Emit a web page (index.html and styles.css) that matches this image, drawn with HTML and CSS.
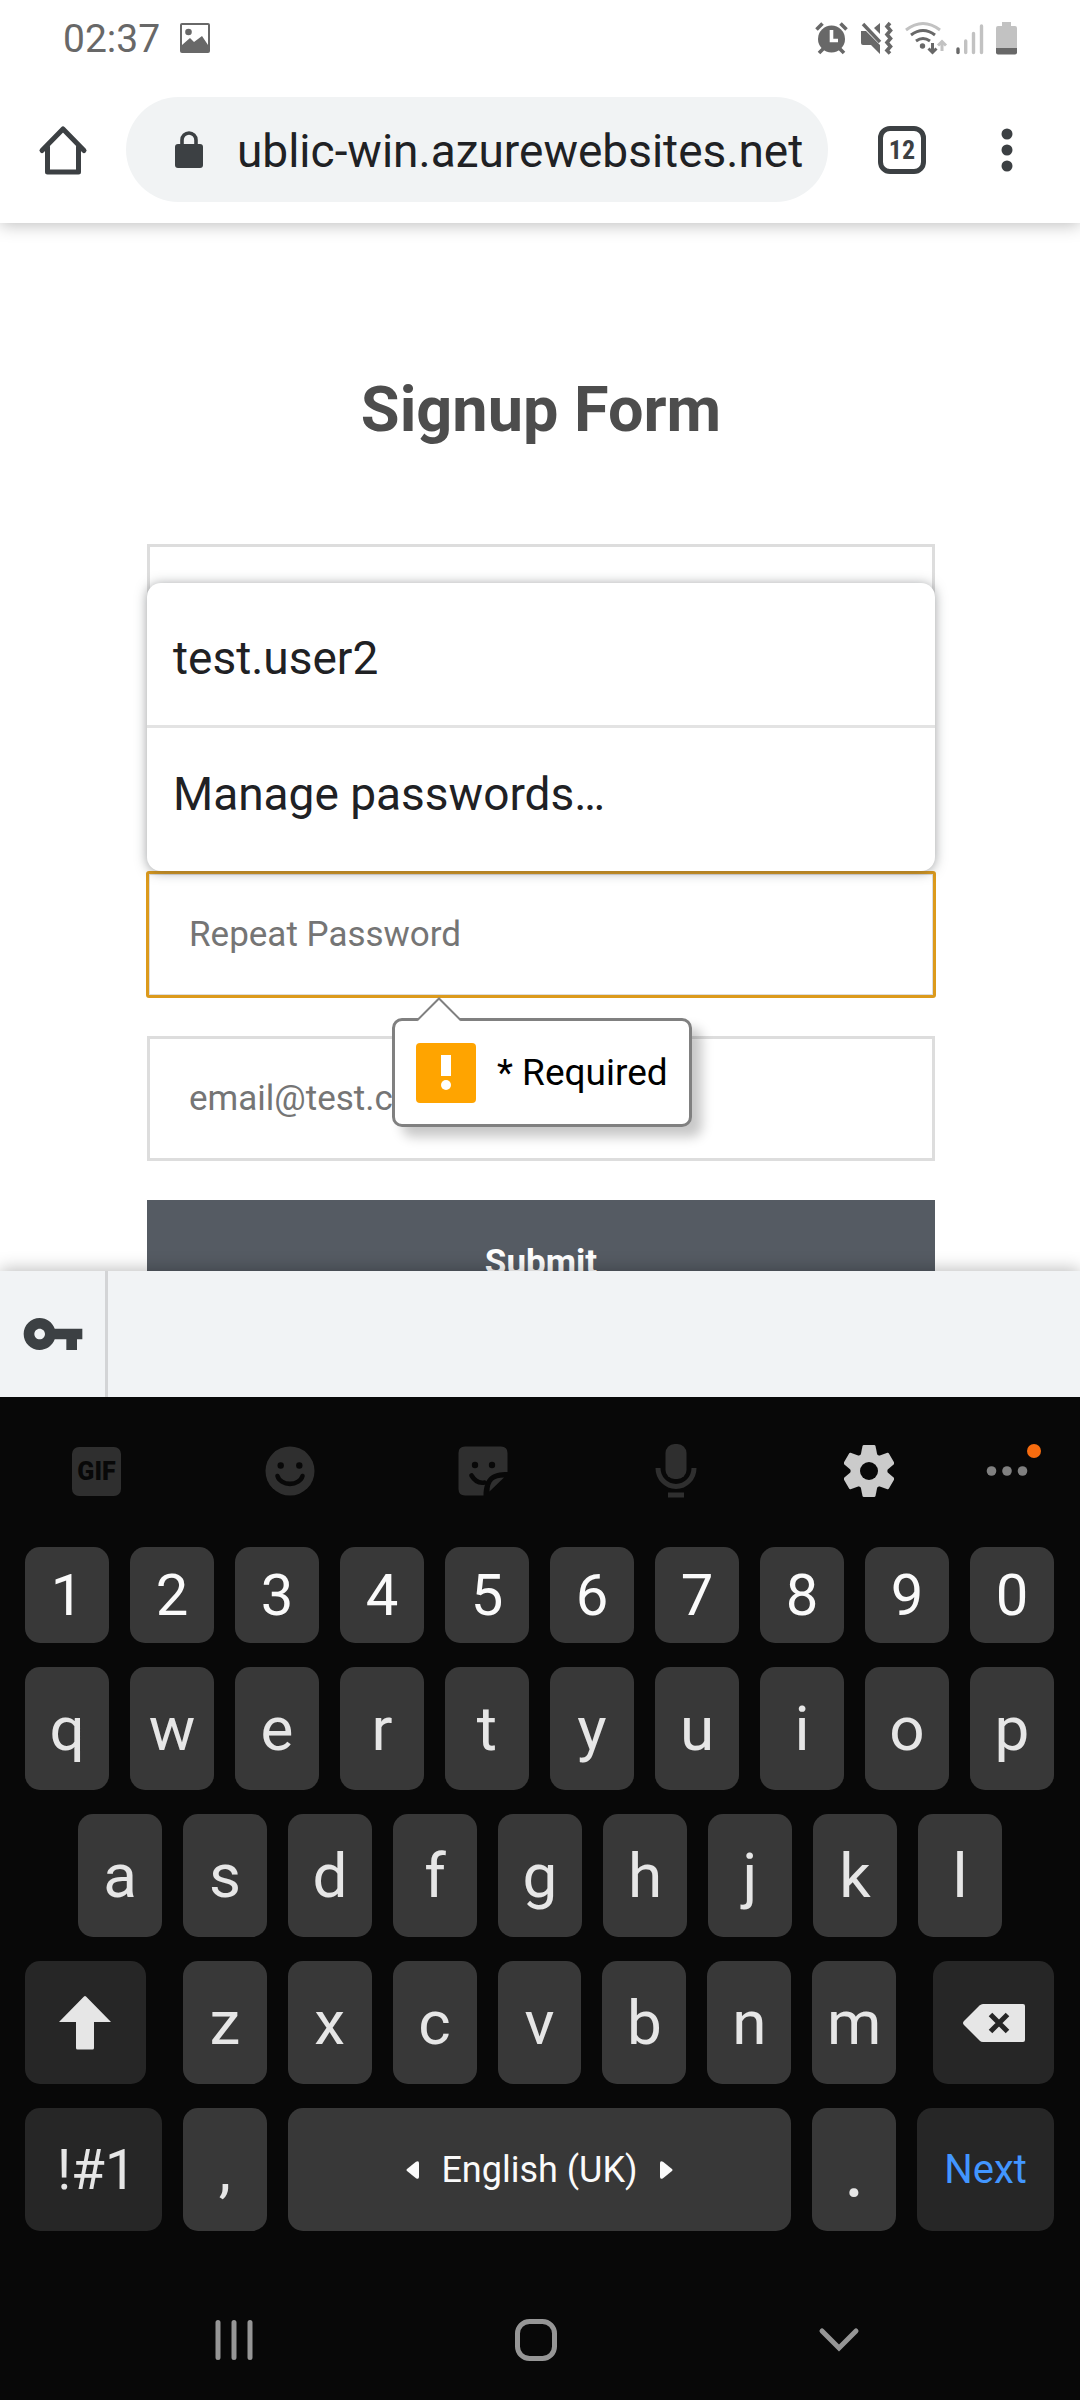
FILE: index.html
```html
<!DOCTYPE html>
<html lang="en">
<head>
<meta charset="utf-8">
<meta name="viewport" content="width=device-width, initial-scale=1">
<title>Signup Form</title>
<link rel="stylesheet" href="styles.css">
</head>
<body>
<header class="top">
  <div class="status">
    <time class="clock">02:37</time>
    <svg class="status-picture" width="32" height="32" viewBox="0 0 32 32"><rect x="1" y="1" width="30" height="30" rx="2" fill="#686868"/><path d="M3 3h26v20l-6-9-8 6-4-4-8 7z" fill="#fff"/><circle cx="9.500" cy="10" r="3.300" fill="#686868"/></svg>
    <div class="status-right">
      <svg width="33" height="34" viewBox="0 0 33 34" fill="none" stroke="#686868"><circle cx="16.500" cy="18" r="13.500" fill="#686868" stroke="none"/><path d="M1.500 8.500l6-6M31.500 8.500l-6-6M4 32l5-5M29 32l-5-5" stroke-width="3.600"/><path d="M16.500 9v10.500h6.500" stroke="#fff" stroke-width="3.600"/></svg>
      <svg width="33" height="34" viewBox="0 0 33 34"><path d="M1 10h5l14 14v9l-9-9H3q-2 0-2-2z" fill="#686868"/><path d="M14 7l6-5v11z" fill="#686868"/><path d="M3 3l17 18" stroke="#686868" stroke-width="3.400"/><path d="M30 2l-3 3.500 3.500 4-3.500 4 3.500 4-3.500 4 3.500 4-3.500 4 3 3" fill="none" stroke="#686868" stroke-width="3.600"/></svg>
      <svg class="wifi" width="43" height="34" viewBox="0 0 43 34" fill="none" stroke="#686868" stroke-width="3"><path d="M1 9q17-13 34 0" stroke="#c2c2c2"/><path d="M6 14q12-9 24 0M11 20q7-5 14 0"/><circle cx="17.500" cy="25" r="2.700" fill="#686868" stroke="none"/><path d="M27.500 22v9M23.500 27.500l4 4 4-4"/><path d="M37 30v-9M33 24.500l4-4 4 4" stroke="#c2c2c2"/></svg>
      <svg width="28" height="34" viewBox="0 0 28 34" stroke-width="3.400" stroke-linecap="round"><path d="M2 28v3.500" stroke="#686868"/><path d="M9.700 20v11.500M17.500 12.500v19M25.500 5v26.500" stroke="#c2c2c2"/></svg>
      <svg width="21" height="34" viewBox="0 0 21 34"><path d="M6 1h9v4h4q2 0 2 2v20H0V7q0-2 2-2h4z" fill="#c2c2c2"/><path d="M0 27h21v4.500q0 2-2 2H2q-2 0-2-2z" fill="#686868"/></svg>
    </div>
  </div>
  <div class="toolbar">
    <button class="icon-button" type="button" aria-label="Home"><svg width="50" height="50" viewBox="0 0 50 50" fill="none" stroke="#3c4043" stroke-width="5" stroke-linejoin="round" stroke-linecap="round"><path d="M4 25.500L25 4l21 21.500"/><path d="M9.500 22v25h31V22"/></svg></button>
    <div class="address">
      <svg width="30" height="40" viewBox="0 0 30 40"><path d="M8 16V10a7 7 0 0 1 14 0v6" fill="none" stroke="#3c4043" stroke-width="3.600"/><rect x="1" y="14" width="28" height="24" rx="3" fill="#3c4043"/></svg>
      <input class="url" type="text" aria-label="Address" value="ublic-win.azurewebsites.net">
    </div>
    <button class="tabs" type="button" aria-label="Open tabs">12</button>
    <button class="icon-button" type="button" aria-label="Menu"><svg width="12" height="44" viewBox="0 0 12 44" fill="#3c4043"><circle cx="6" cy="6" r="5.500"/><circle cx="6" cy="22" r="5.500"/><circle cx="6" cy="38" r="5.500"/></svg></button>
  </div>
</header>

<main class="page">
  <h1 class="title">Signup Form</h1>
  <form class="form">
    <input class="field" type="text" aria-label="Username">
    <input class="field" type="password" aria-label="Password">
    <div class="anchor">
      <input class="field field-active" type="text" placeholder="Repeat Password" aria-label="Repeat Password">
      <div class="suggestions">
        <button class="suggestion" type="button">test.user2</button>
        <button class="suggestion" type="button">Manage passwords…</button>
      </div>
      <div class="tip" role="alert">
        <svg class="tip-arrow" width="44" height="26" viewBox="0 0 44 26"><path d="M0 26V23L22 1l22 22v3z" fill="#fff"/><path d="M0 23.500L22 1.500l22 22" fill="none" stroke="#808080" stroke-width="2"/></svg>
        <svg width="60" height="60" viewBox="0 0 60 60"><rect width="60" height="60" rx="4" fill="#ffa400"/><path d="M25 12h10v21H25z" fill="#fff"/><circle cx="30" cy="42" r="5" fill="#fff"/></svg>
        <span>* Required</span>
      </div>
    </div>
    <input class="field" type="email" placeholder="email@test.com" aria-label="Email">
    <button class="submit" type="submit">Submit</button>
  </form>
</main>

<div class="accessory">
  <button class="passwords" type="button" aria-label="Saved passwords"><svg width="64" height="64" viewBox="0 0 24 24" fill="#3c4043"><path d="M12.650 10C11.830 7.670 9.610 6 7 6c-3.310 0-6 2.690-6 6s2.690 6 6 6c2.610 0 4.830-1.670 5.650-4H17v4h4v-4h2v-4H12.650zM7 14c-1.100 0-2-.9-2-2s.9-2 2-2 2 .9 2 2-.9 2-2 2z"/></svg></button>
</div>

<section class="keyboard" aria-label="Keyboard">
  <div class="tools">
    <button class="tool" type="button"><span class="gif">GIF</span></button>
    <button class="tool" type="button" aria-label="Emoji"><svg width="50" height="50" viewBox="0 0 50 50"><circle cx="25" cy="25" r="24.500" fill="#2f2f2f"/><circle cx="15.700" cy="19.500" r="3.200" fill="#080808"/><circle cx="34.300" cy="19.500" r="3.200" fill="#080808"/><path d="M12.500 30a12.800 10 0 0 0 25 0" fill="none" stroke="#080808" stroke-width="4.600" stroke-linecap="round"/></svg></button>
    <button class="tool" type="button" aria-label="Stickers"><svg width="50" height="50" viewBox="0 0 50 50"><path d="M7 .5h36q6.500 0 6.500 6.500v19C34 26 26 31 25.500 49.500H7Q.5 49.500.5 43V7Q.5.5 7 .5z" fill="#2f2f2f"/><circle cx="17" cy="19" r="3.200" fill="#080808"/><circle cx="34" cy="19" r="3.200" fill="#080808"/><path d="M13.500 29.500q5 8.500 13 7" fill="none" stroke="#080808" stroke-width="4.600" stroke-linecap="round"/><path d="M46 31.500L31.500 45.500C31.500 35 36 31.500 46 31.500z" fill="#2f2f2f"/></svg></button>
    <button class="tool" type="button" aria-label="Voice input"><svg width="42" height="54" viewBox="0 0 42 54" fill="#2f2f2f"><rect x="10.500" y="0" width="21" height="35" rx="9"/><path d="M3 24a18 18.500 0 0 0 36 0" fill="none" stroke="#2f2f2f" stroke-width="5"/><rect x="13" y="48.500" width="16" height="5"/></svg></button>
    <button class="tool" type="button" aria-label="Settings"><svg width="50" height="52" viewBox="-25 -26 50 52"><g fill="#cbcbcb"><circle r="18.500"/><path id="tooth" d="M-8.500-15l2-10q.3-1 1.300-1h10.400q1 0 1.300 1l2 10z"/><use href="#tooth" transform="rotate(60)"/><use href="#tooth" transform="rotate(120)"/><use href="#tooth" transform="rotate(180)"/><use href="#tooth" transform="rotate(240)"/><use href="#tooth" transform="rotate(300)"/></g><circle r="9" fill="#080808"/></svg></button>
    <button class="tool" type="button" aria-label="More"><svg width="70" height="54" viewBox="0 0 70 54"><g fill="#808080"><circle cx="19.500" cy="27" r="4.800"/><circle cx="35" cy="27" r="4.800"/><circle cx="50.500" cy="27" r="4.800"/></g><circle cx="62" cy="7" r="7" fill="#f76c0f"/></svg></button>
  </div>
  <div class="row row-digits">
    <button class="key">1</button><button class="key">2</button><button class="key">3</button><button class="key">4</button><button class="key">5</button><button class="key">6</button><button class="key">7</button><button class="key">8</button><button class="key">9</button><button class="key">0</button>
  </div>
  <div class="row">
    <button class="key">q</button><button class="key">w</button><button class="key">e</button><button class="key">r</button><button class="key">t</button><button class="key">y</button><button class="key">u</button><button class="key">i</button><button class="key">o</button><button class="key">p</button>
  </div>
  <div class="row row-home">
    <button class="key">a</button><button class="key">s</button><button class="key">d</button><button class="key">f</button><button class="key">g</button><button class="key">h</button><button class="key">j</button><button class="key">k</button><button class="key">l</button>
  </div>
  <div class="row row-shift">
    <button class="key key-dark key-left" aria-label="Shift"><svg width="54" height="54" viewBox="0 0 54 54" fill="#e6e6e6"><path d="M26 .5q1-.8 2 0L53 26H36v26q0 1.500-1.500 1.500h-15Q18 53.500 18 52V26H1z"/></svg></button><button class="key">z</button><button class="key">x</button><button class="key">c</button><button class="key">v</button><button class="key">b</button><button class="key">n</button><button class="key">m</button><button class="key key-dark key-right" aria-label="Backspace"><svg width="64" height="38" viewBox="0 0 64 38"><path d="M21 0h40q2 0 2 2v34q0 2-2 2H21q-2 0-3.500-1.500L2 21q-2-2 0-4L17.500 1.500Q19 0 21 0z" fill="#e6e6e6"/><path d="M28.500 10.500l17 17M45.500 10.500l-17 17" stroke="#262626" stroke-width="5"/></svg></button>
  </div>
  <div class="row row-space">
    <button class="key key-dark key-symbols">!#1</button><button class="key">,</button>
    <button class="key key-space"><svg width="13" height="18" viewBox="0 0 13 18" fill="#fafafa"><path d="M1 8L10 .8q3-1.600 3 1.400v13.600q0 3-3 1.400L1 10q-1-1 0-2z"/></svg><span>English (UK)</span><svg width="13" height="18" viewBox="0 0 13 18" fill="#fafafa"><path d="M12 8L3 .8Q0-.8 0 2.200v13.600q0 3 3 1.400L12 10q1-1 0-2z"/></svg></button>
    <button class="key key-dot">.</button><button class="key key-dark key-next">Next</button>
  </div>
</section>

<nav class="system">
  <button class="tool" aria-label="Recent apps"><svg width="38" height="42" viewBox="0 0 38 42" stroke="#969696" stroke-width="5" stroke-linecap="round"><path d="M3 3.500v35M19 3.500v35M35 3.500v35"/></svg></button>
  <button class="tool" aria-label="Home screen"><svg width="42" height="42" viewBox="0 0 42 42"><rect x="2.500" y="2.500" width="37" height="37" rx="12" fill="none" stroke="#969696" stroke-width="5"/></svg></button>
  <button class="tool" aria-label="Hide keyboard"><svg width="42" height="26" viewBox="0 0 42 26"><path d="M4 4l17 17L38 4" fill="none" stroke="#969696" stroke-width="5" stroke-linecap="round"/></svg></button>
</nav>
</body>
</html>
```
FILE: styles.css
```css
* { box-sizing: border-box; }

body {
  margin: 0;
  height: 100vh;
  display: flex;
  flex-direction: column;
  background: #fff;
  font-family: Roboto, sans-serif;
  font-size: 35px;
}

button, input {
  margin: 0;
  padding: 0;
  border: 0;
  background: none;
  font: inherit;
  color: inherit;
}

svg { display: block; flex: none; }

/* Browser chrome */
.top {
  position: relative;
  z-index: 2;
  background: #fff;
  box-shadow: 0 2px 16px rgba(0, 0, 0, 0.26);
}

.status {
  display: flex;
  align-items: center;
  height: 76px;
  padding: 0 63px;
  color: #686868;
}

.clock {
  padding-top: 2px;
  font-size: 39px;
  line-height: 48px;
}

.status-picture { margin-left: 19px; }

.status-right {
  display: flex;
  gap: 12px;
  margin-left: auto;
}

.wifi { margin-right: -4px; }

.toolbar {
  display: flex;
  align-items: center;
  height: 147px;
}

.icon-button {
  flex: none;
  display: flex;
  justify-content: center;
  width: 126px;
}

.icon-button:last-child { width: 147px; }

.address {
  flex: 1;
  min-width: 0;
  display: flex;
  align-items: center;
  gap: 33px;
  height: 105px;
  padding: 0 20px 0 48px;
  border-radius: 53px;
  background: #f1f3f4;
}

.url {
  flex: 1;
  min-width: 0;
  height: 60px;
  padding-top: 3px;
  font-size: 46px;
  color: #202124;
}

.tabs {
  flex: none;
  width: 48px;
  height: 48px;
  margin: 0 7px 0 50px;
  border: 5px solid #3c4043;
  border-radius: 12px;
  font: bold 26px/38px "Roboto Condensed", Roboto, sans-serif;
  color: #3c4043;
}

/* Web page */
.page {
  flex: 1;
  min-height: 0;
  overflow: hidden;
  padding: 149px 145px 0 147px;
}

.title {
  margin: 0 0 96px;
  font-size: 63px;
  line-height: 76px;
  text-align: center;
  color: #4d4d4d;
}

.form {
  display: flex;
  flex-direction: column;
  gap: 39px;
}

.field {
  display: block;
  width: 100%;
  height: 125px;
  padding: 0 39px;
  border: 3px solid #ddd;
  background: #fff;
}

.field::placeholder { color: #757575; opacity: 1; }

.field-active {
  border-radius: 2px;
  outline: 3px solid #dc9a1c;
  outline-offset: -2px;
}

.anchor { position: relative; }

.suggestions {
  position: absolute;
  right: 0;
  bottom: 126px;
  left: 0;
  padding: 8px 0 12px;
  border-radius: 14px;
  background: #fff;
  box-shadow: 0 1px 12px rgba(60, 64, 67, 0.5);
}

.suggestion {
  display: block;
  width: 100%;
  height: 134px;
  padding: 0 26px;
  font-size: 46px;
  text-align: left;
  color: #202124;
}

.suggestion + .suggestion { border-top: 3px solid #e3e3e3; }

.tip {
  position: absolute;
  z-index: 1;
  top: 146px;
  left: 245px;
  display: flex;
  align-items: center;
  gap: 21px;
  height: 109px;
  padding: 0 21px;
  border: 3px solid #808080;
  border-radius: 10px;
  background: #fff;
  box-shadow: 10px 10px 12px rgba(0, 0, 0, 0.22);
  font-size: 37px;
  color: #000;
  white-space: nowrap;
}

.tip-arrow {
  position: absolute;
  top: -24px;
  left: 22px;
}

.submit {
  height: 125px;
  background: #555b63;
  font-weight: 700;
  color: #fff;
}

/* Password bar above the keyboard */
.accessory {
  position: relative;
  z-index: 2;
  height: 126px;
  background: #f1f3f5;
  box-shadow: 0 -2px 16px rgba(0, 0, 0, 0.26);
}

.passwords {
  display: flex;
  align-items: center;
  width: 108px;
  height: 100%;
  padding-left: 21px;
  border-right: 3px solid #d3d4d6;
}

/* Keyboard */
.keyboard {
  position: relative;
  z-index: 3;
  display: flex;
  flex-direction: column;
  gap: 24px;
  padding: 0 26px 49px 25px;
  background: #080808;
  color: #e6e6e6;
}

.tools {
  display: grid;
  grid-template-columns: repeat(5, 193fr) 83fr;
  height: 126px;
  margin: 0 6px 0 -25px;
  padding-top: 22px;
}

.tool {
  display: flex;
  align-items: center;
  justify-content: center;
}

.gif {
  width: 49px;
  height: 49px;
  border-radius: 7px;
  background: #2f2f2f;
  font: 900 25px/49px Roboto, sans-serif;
  color: #080808;
}

.row {
  display: grid;
  grid-template-columns: repeat(10, 1fr);
  gap: 21px;
  height: 123px;
}

.row-digits {
  height: 96px;
  color: #fafafa;
}

.row-home {
  grid-template-columns: repeat(9, 1fr);
  padding: 0 52px 0 53px;
}

.row-shift { grid-template-columns: 137fr repeat(7, 84fr) 137fr; }
.row-space { grid-template-columns: 137fr 84fr 504fr 84fr 137fr; }

.key {
  display: flex;
  align-items: center;
  justify-content: center;
  min-width: 0;
  border-radius: 15px;
  background: #383838;
  font-size: 62px;
  font-weight: 450;
}

.row-digits .key { font-size: 58px; }
.key-dark { background: #262626; }
.key-left { margin-right: 16px; }
.key-right { margin-left: 16px; }

.row .key-symbols {
  padding-left: 6px;
  font-size: 55px;
  font-weight: 400;
}

.row .key-dot { font-size: 80px; font-weight: 400; }

.row .key-space {
  gap: 22px;
  font-size: 36px;
  font-weight: 400;
  color: #fafafa;
}

.row .key-next {
  font-size: 40px;
  font-weight: 400;
  color: #4296ff;
}

/* System navigation */
.system {
  position: relative;
  z-index: 3;
  display: grid;
  grid-template-columns: repeat(3, 1fr);
  height: 120px;
  padding: 0 90px 0 83px;
  background: #080808;
}
```
